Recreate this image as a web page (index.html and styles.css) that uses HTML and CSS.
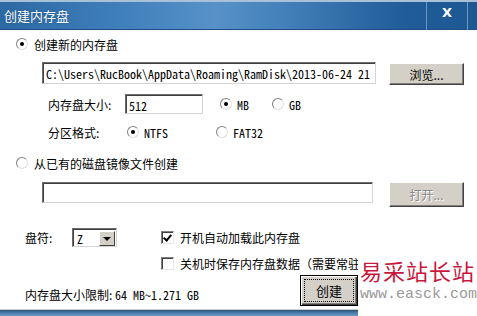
FILE: index.html
```html
<!DOCTYPE html>
<html lang="zh-CN">
<head>
    <meta charset="UTF-8">
    <title>创建内存盘</title>
    <link rel="stylesheet" href="styles.css">
</head>
<body>
<div class="window">
    <div class="titlebar">
        <span class="title">创建内存盘</span>
        <span class="close">X</span>
    </div>

    <div class="content">
        <div class="row row-opt1">
            <span class="radio on"></span>
            <span class="label">创建新的内存盘</span>
        </div>

        <div class="row row-path">
            <div class="field path mono">C:\Users\RucBook\AppData\Roaming\RamDisk\2013-06-24 21</div>
            <div class="btn browse">浏览...</div>
        </div>

        <div class="row row-size">
            <span class="cell-label">内存盘大小:</span>
            <div class="field size mono">512</div>
            <span class="radio on unit"></span><span class="mono opt">MB</span>
            <span class="radio gb"></span><span class="mono opt">GB</span>
        </div>

        <div class="row row-format">
            <span class="cell-label">分区格式:</span>
            <span class="radio on ntfs"></span><span class="mono opt ntfs-text">NTFS</span>
            <span class="radio"></span><span class="mono opt">FAT32</span>
        </div>

        <div class="row row-opt2">
            <span class="radio"></span>
            <span class="label">从已有的磁盘镜像文件创建</span>
        </div>

        <div class="row row-file">
            <div class="field file"></div>
            <div class="btn open disabled">打开...</div>
        </div>

        <div class="row row-drive">
            <span class="drive-label">盘符:</span>
            <div class="select">
                <span class="mono">Z</span>
                <span class="drop"></span>
            </div>
            <span class="check on"></span>
            <span class="label">开机自动加载此内存盘</span>
        </div>

        <div class="row row-save">
            <span class="check"></span>
            <span class="label">关机时保存内存盘数据（需要常驻</span>
        </div>

        <div class="row row-bottom">
            <span class="limit">内存盘大小限制: <span class="mono">64 MB~1.271 GB</span></span>
            <div class="btn create"><span class="focus">创建</span></div>
        </div>
    </div>

    <div class="frame-bottom"></div>

    <div class="watermark">
        <div class="wm-cn">易采站长站</div>
        <div class="wm-url">www.easck.com</div>
    </div>
</div>
</body>
</html>
```

FILE: styles.css
```css
body {
    margin: 0;
    background: #fff;
}
.window {
    position: relative;
    width: 477px;
    height: 316px;
    overflow: hidden;
    background: #fff;
    font-family: "Noto Sans CJK SC", sans-serif;
    font-size: 12px;
    color: #000;
}
.mono {
    font-family: "Noto Sans Mono CJK SC", "DejaVu Sans Mono", monospace;
    font-size: 12px;
}

/* title bar */
.titlebar {
    height: 30px;
    display: flex;
    align-items: center;
    background: linear-gradient(90deg, #2c69a3 0%, #3f7fba 25%, #5791c8 45%, #3c79b3 65%, #1f5c98 85%, #1d5893 100%);
    box-shadow: inset 0 2px #a9c0d6, inset 0 -1px #1c4f84;
}
.title {
    flex: 1;
    padding-left: 4px;
    color: #fff;
    font-size: 13px;
    text-shadow: 0 0 2px #1b4a7c;
}
.close {
    width: 42px;
    height: 28px;
    margin-top: 2px;
    margin-right: 9px;
    display: flex;
    align-items: center;
    justify-content: center;
    border-left: 1px solid #6f98c0;
    border-right: 1px solid #6f98c0;
    color: #fff;
    font-family: "DejaVu Sans", sans-serif;
    font-weight: bold;
    font-size: 13px;
    padding-bottom: 8px;
    box-sizing: border-box;
}

/* body */
.content {
    padding-left: 16px;
}
.row {
    display: flex;
    align-items: center;
}
.label {
    margin-left: 6px;
}
.row-opt1 {
    height: 16px;
    margin-top: 6px;
}
.row-path {
    margin-top: 10px;
    padding-left: 26px;
    align-items: flex-start;
}
.row-size {
    margin-top: 9px;
    height: 20px;
}
.row-format {
    margin-top: 8px;
    height: 20px;
}
.row-opt2 {
    margin-top: 13px;
    height: 16px;
}
.row-file {
    margin-top: 11px;
    padding-left: 26px;
    align-items: flex-start;
}
.row-drive {
    margin-top: 21px;
    height: 19px;
}
.row-save {
    margin-top: 8px;
    height: 16px;
    width: 197px;
    padding-left: 145px;
    white-space: nowrap;
    overflow: hidden;
}
.row-bottom {
    margin-top: 4px;
    height: 31px;
}

.cell-label {
    width: 77px;
    margin-left: 32px;
}
.opt {
    margin-left: 5px;
}
.unit {
    margin-left: 17px;
}
.gb {
    margin-left: 23px;
}
.ntfs {
    margin-left: 2px;
}
.ntfs-text {
    width: 72px;
}

/* controls */
.radio {
    width: 12px;
    height: 12px;
    flex: none;
    box-sizing: border-box;
    border-radius: 50%;
    border: 1px solid;
    border-color: #808080 #e0e0e0 #e0e0e0 #808080;
    background: #fff;
    position: relative;
}
.radio.on::after {
    content: "";
    position: absolute;
    left: 3px;
    top: 3px;
    width: 4px;
    height: 4px;
    border-radius: 50%;
    background: #000;
}
.check {
    width: 13px;
    height: 13px;
    flex: none;
    box-sizing: border-box;
    border: 1px solid;
    border-color: #808080 #e8e8e8 #e8e8e8 #808080;
    box-shadow: inset 1px 1px #404040;
    background: #fff;
    position: relative;
}
.check.on::after {
    content: "";
    position: absolute;
    left: 3px;
    top: 1px;
    width: 3px;
    height: 6px;
    border: solid #000;
    border-width: 0 2px 2px 0;
    transform: rotate(40deg);
}
.row-drive .check {
    margin-left: 44px;
}

.field {
    box-sizing: border-box;
    border: 1px solid;
    border-color: #6c6c6c #d4d4d4 #d4d4d4 #6c6c6c;
    box-shadow: inset 1px 1px #404040;
    background: #fff;
    white-space: nowrap;
    overflow: hidden;
    padding: 2px 0 0 3px;
}
.path {
    width: 334px;
    height: 22px;
}
.size {
    width: 78px;
    height: 20px;
}
.file {
    width: 331px;
    height: 21px;
}

.btn {
    box-sizing: border-box;
    background: #d4d0c8;
    border: 1px solid;
    border-color: #fff #404040 #404040 #fff;
    box-shadow: inset -1px -1px #808080;
    display: flex;
    align-items: center;
    justify-content: center;
}
.browse {
    width: 75px;
    height: 22px;
    margin-left: 13px;
    margin-top: 1px;
}
.open {
    width: 75px;
    height: 25px;
    margin-left: 16px;
}
.disabled {
    color: #8a8a8a;
    text-shadow: 1px 1px #fff;
}
.create {
    width: 58px;
    height: 31px;
    border: 1px solid #000;
    box-shadow: inset 1px 1px #fff, inset -1px -1px #404040, inset -2px -2px #808080;
}
.focus {
    width: 48px;
    height: 21px;
    border: 1px dotted #000;
    display: flex;
    align-items: center;
    justify-content: center;
    font-size: 13px;
}

.drive-label {
    margin-left: 9px;
    width: 47px;
}
.select {
    width: 45px;
    height: 19px;
    box-sizing: border-box;
    border: 1px solid;
    border-color: #6c6c6c #d4d4d4 #d4d4d4 #6c6c6c;
    box-shadow: inset 1px 1px #404040;
    display: flex;
    align-items: center;
    justify-content: space-between;
    padding: 1px 1px 0 4px;
}
.drop {
    width: 16px;
    height: 15px;
    box-sizing: border-box;
    background: #d4d0c8;
    border: 1px solid;
    border-color: #fff #404040 #404040 #fff;
    position: relative;
}
.drop::after {
    content: "";
    position: absolute;
    left: 3px;
    top: 5px;
    border: 4px solid transparent;
    border-top: 4px solid #000;
    border-bottom: 0;
}
.limit {
    margin-left: 9px;
    width: 275px;
    padding-top: 8px;
}

/* bottom edge of window */
.frame-bottom {
    position: absolute;
    left: 0;
    bottom: 0;
    width: 477px;
    height: 7px;
    background: linear-gradient(180deg, #c9d1d9 0, #c9d1d9 1px, #3d5470 1px, #3d5470 2px, #2e6499 2px, #6d9bc6 100%);
}

/* site watermark over the screenshot */
.watermark {
    position: absolute;
    left: 358px;
    top: 254px;
    width: 119px;
    height: 62px;
    background: #fff;
}
.wm-cn {
    margin-top: 1px;
    margin-left: 2px;
    color: #c8173f;
    font-size: 22px;
    letter-spacing: 1px;
    line-height: 30px;
    white-space: nowrap;
}
.wm-url {
    margin-left: 2px;
    color: #9a9a9a;
    font-family: "Liberation Mono", monospace;
    font-size: 15px;
    line-height: 20px;
    white-space: nowrap;
}
```
